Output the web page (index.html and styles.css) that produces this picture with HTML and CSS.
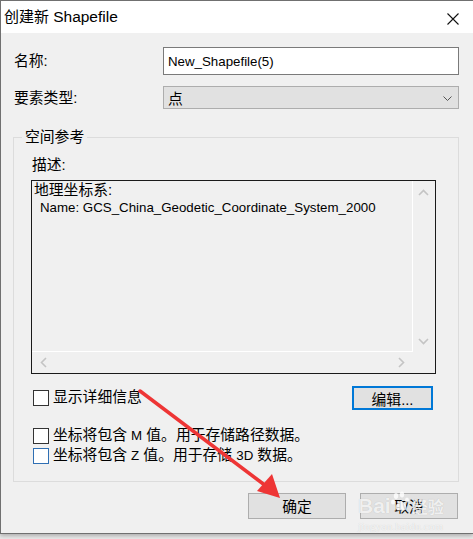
FILE: index.html
```
<!DOCTYPE html>
<html lang="zh-CN">
<head>
<meta charset="utf-8">
<title>创建新 Shapefile</title>
<link rel="stylesheet" href="styles.css">
</head>
<body>
<div class="window">
  <div class="titlebar">
    <span class="title">创建新 <span class="lat-title">Shapefile</span></span>
    <svg class="close" width="12" height="12" viewBox="0 0 12 12"><path d="M0.5 0.5 L11.5 11.5 M11.5 0.5 L0.5 11.5" stroke="#111" stroke-width="1.1" fill="none"/></svg>
  </div>
  <div class="content">
    <div class="row">
      <span class="label">名称:</span>
      <div class="input"><span class="lat">New_Shapefile(5)</span></div>
    </div>
    <div class="row row-type">
      <span class="label">要素类型:</span>
      <div class="select">
        <span>点</span>
        <svg class="select-chev" width="9" height="5" viewBox="0 0 9 5"><path d="M0.5 0.5 L4.5 4.5 L8.5 0.5" stroke="#555" stroke-width="1" fill="none"/></svg>
      </div>
    </div>
    <fieldset class="group">
      <legend>空间参考</legend>
      <div class="group-inner">
        <div class="desc-label">描述:</div>
        <div class="desc">
          <div class="desc-text">
            <div>地理坐标系:</div>
            <div class="lat name-line">Name: GCS_China_Geodetic_Coordinate_System_2000</div>
          </div>
          <div class="vscroll">
            <svg width="11" height="7" viewBox="0 0 11 7"><path d="M1 6 L5.5 1.5 L10 6" stroke="#c4c4c4" stroke-width="1.6" fill="none"/></svg>
            <svg width="11" height="7" viewBox="0 0 11 7"><path d="M1 1 L5.5 5.5 L10 1" stroke="#c4c4c4" stroke-width="1.6" fill="none"/></svg>
          </div>
          <div class="hscroll">
            <svg width="7" height="11" viewBox="0 0 7 11"><path d="M6 1 L1.5 5.5 L6 10" stroke="#c4c4c4" stroke-width="1.6" fill="none"/></svg>
            <svg width="7" height="11" viewBox="0 0 7 11"><path d="M1 1 L5.5 5.5 L1 10" stroke="#c4c4c4" stroke-width="1.6" fill="none"/></svg>
          </div>
          <div class="corner"></div>
        </div>
        <div class="detail-row">
          <div class="check"><span class="box"></span><span>显示详细信息</span></div>
          <div class="btn edit">编辑...</div>
        </div>
        <div class="check check-row first"><span class="box"></span><span>坐标将包含 <span class="lat">M</span> 值。用于存储路径数据。</span></div>
        <div class="check check-row"><span class="box blue"></span><span>坐标将包含 <span class="lat">Z</span> 值。用于存储 <span class="lat">3D</span> 数据。</span></div>
      </div>
    </fieldset>
    <div class="buttons">
      <div class="btn dlg">确定</div>
      <div class="btn dlg">取消</div>
    </div>
  </div>
  <svg class="arrow" width="473" height="539" viewBox="0 0 473 539">
    <line x1="140" y1="391" x2="266" y2="486" stroke="#ee3535" stroke-width="3.5" stroke-linecap="round"/>
    <polygon points="280,498 257,491 272,474" fill="#ee3535"/>
  </svg>
  <div class="watermark">
    <div class="wm-top">
      <span class="wm-bai">Bai</span>
      <svg class="wm-paw" width="22" height="22" viewBox="0 0 22 22">
        <ellipse cx="6" cy="5" rx="2.2" ry="3" fill="rgba(255,255,255,0.8)"/>
        <ellipse cx="12" cy="3.5" rx="2.2" ry="3" fill="rgba(255,255,255,0.8)"/>
        <ellipse cx="3" cy="11" rx="2" ry="2.6" fill="rgba(255,255,255,0.8)"/>
        <ellipse cx="17" cy="9" rx="2" ry="2.6" fill="rgba(255,255,255,0.8)"/>
        <path d="M10 10 C6 13 4 17 7 19 C9 20 11 19 13 19.5 C16 20 18 17 15 13 C13 10.5 11.5 9.5 10 10 Z" fill="rgba(255,255,255,0.8)"/>
      </svg>
      <span class="wm-cn">经验</span>
    </div>
    <div class="wm-url">jingyan.baidu.com</div>
  </div>
</div>
</body>
</html>
```
FILE: styles.css
```
html, body {
  margin: 0;
  padding: 0;
}
body {
  width: 473px;
  height: 539px;
  overflow: hidden;
  background: #e9e9e9;
  font-family: "Liberation Sans", "Noto Sans CJK SC", sans-serif;
  font-size: 14.8px;
  color: #000;
}
.window {
  position: relative;
  width: 472px;
  height: 532px;
  border: 1px solid #707070;
  border-right: none;
  background: #f0f0f0;
  box-shadow: 0 2px 4px rgba(0,0,0,0.25);
}
.titlebar {
  height: 32px;
  background: #fff;
  display: flex;
  align-items: center;
  padding-left: 3px;
}
.title {
  font-size: 15px;
  line-height: 32px;
  flex: 1;
}
.lat-title {
  font-size: 15.5px;
}
.close {
  margin-right: 14px;
  margin-top: 3px;
}
.content {
  padding: 14px 0 0 12px;
}
.lat {
  font-size: 13.3px;
}
.row {
  display: flex;
  align-items: center;
}
.label {
  width: 149px;
  padding-left: 1px;
  line-height: 18px;
}
.input {
  box-sizing: border-box;
  width: 296px;
  height: 28px;
  border: 1px solid #7a7a7a;
  background: #fff;
  padding-left: 4px;
  display: flex;
  align-items: center;
}
.row-type {
  margin-top: 11px;
}
.select {
  box-sizing: border-box;
  width: 296px;
  height: 23px;
  border: 1px solid #adadad;
  background: #e1e1e1;
  padding: 0 6px 0 4px;
  display: flex;
  align-items: center;
  justify-content: space-between;
}
.select-chev {
  margin-top: 1px;
}
.group {
  box-sizing: border-box;
  width: 446px;
  margin: 19px 0 0 0;
  padding: 0;
  border: 1px solid #dcdcdc;
  min-width: 0;
}
.group legend {
  margin-left: 8px;
  padding: 0 3px;
  line-height: 18px;
}
.group-inner {
  padding: 10px 0 15px 17px;
}
.desc-label {
  line-height: 18px;
  padding-left: 1px;
}
.desc {
  margin-top: 6px;
  box-sizing: border-box;
  width: 405px;
  height: 194px;
  border: 1px solid #1a1a1a;
  display: grid;
  grid-template-columns: 381px 22px;
  grid-template-rows: 171px 21px;
}
.desc-text {
  border-right: 1px solid #fff;
  border-bottom: 1px solid #fff;
  padding-left: 2px;
  line-height: 18px;
}
.name-line {
  padding-left: 6px;
}
.vscroll {
  display: flex;
  flex-direction: column;
  justify-content: space-between;
  align-items: center;
  padding: 8px 1px 7px 0;
}
.hscroll {
  display: flex;
  justify-content: space-between;
  align-items: center;
  padding: 0 8px 0 8px;
}
.detail-row {
  margin-top: 12px;
  height: 24px;
  width: 402px;
  display: flex;
  align-items: center;
  justify-content: space-between;
}
.check {
  display: flex;
  align-items: center;
  padding-left: 2px;
  line-height: 20px;
}
.check > span:last-child {
  margin-top: -2px;
}
.box {
  box-sizing: border-box;
  width: 16px;
  height: 16px;
  border: 1px solid #333;
  background: #fff;
  margin-right: 4px;
  flex: none;
}
.box.blue {
  border-color: #2f6fb3;
}
.btn {
  box-sizing: border-box;
  display: flex;
  align-items: center;
  justify-content: center;
  background: #e1e1e1;
  border: 1px solid #adadad;
}
.edit {
  width: 81px;
  height: 24px;
  border: 2px solid #0078d7;
}
.check-row {
  height: 20px;
}
.check-row.first {
  margin-top: 16px;
}
.buttons {
  width: 446px;
  margin-top: 11px;
  display: flex;
  justify-content: flex-end;
  gap: 14px;
}
.dlg {
  width: 98px;
  height: 26px;
  padding-bottom: 2px;
}
.buttons .dlg:last-child {
  margin-right: 1px;
}
.arrow {
  position: absolute;
  left: -1px;
  top: -1px;
  pointer-events: none;
}
.watermark {
  position: absolute;
  left: 357px;
  top: 484px;
  pointer-events: none;
  color: rgba(255,255,255,0.78);
  text-shadow: 0 0 1px rgba(0,0,0,0.18);
}
.wm-top {
  display: flex;
  align-items: flex-end;
}
.wm-bai {
  font-family: "Liberation Sans", sans-serif;
  font-weight: bold;
  font-size: 21px;
  line-height: 22px;
  margin-top: 10px;
}
.wm-paw {
  margin: 0 0 4px -1px;
}
.wm-cn {
  font-family: "Noto Sans CJK SC", sans-serif;
  font-size: 16px;
  line-height: 22px;
  font-weight: bold;
}
.wm-url {
  font-family: "Liberation Serif", serif;
  font-size: 11px;
  line-height: 14px;
  margin-top: 2px;
  letter-spacing: 0.2px;
}
```
